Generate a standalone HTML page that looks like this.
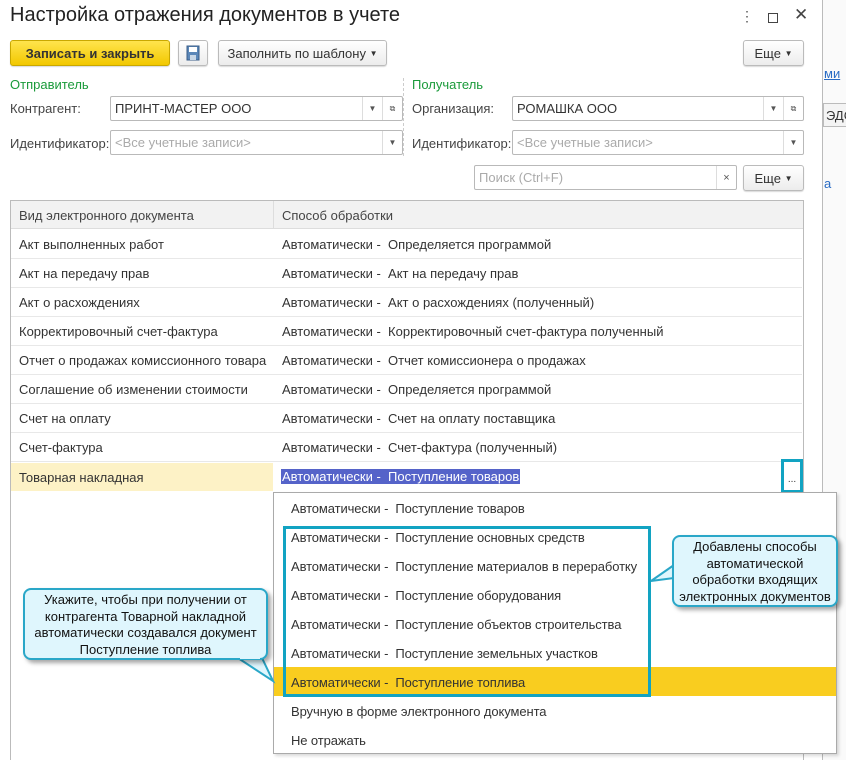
<!DOCTYPE html>
<html><head><meta charset="utf-8"><style>
*{box-sizing:border-box;margin:0;padding:0}
body{width:846px;height:760px;overflow:hidden;background:#fff;font-family:"Liberation Sans",sans-serif;font-size:13px;color:#333;position:relative}
.a{position:absolute}
.btn{position:absolute;border:1px solid #bbb;border-radius:3px;background:linear-gradient(#fff,#ececec);box-shadow:0 1px 1px rgba(0,0,0,.15);font-size:13px;color:#333;display:flex;align-items:center;justify-content:center}
.inp{position:absolute;border:1px solid #b9b9b9;border-radius:2px;background:#fff;height:24px;display:flex;align-items:center;padding-left:4px}
.dd{position:absolute;top:0;bottom:0;width:20px;border-left:1px solid #ddd;display:flex;align-items:center;justify-content:center;font-size:8px;color:#555}
.lbl{position:absolute;font-size:13px;color:#444}
.ph{color:#aaa}
.row{position:absolute;left:11px;width:791px;height:29px;border-bottom:1px solid #e8e8e8}
.row span{position:absolute;top:7px}
.c1{left:8px}.c2{left:271px}
.item{position:absolute;left:17px;font-size:13px;color:#333;letter-spacing:-0.1px}
.call{position:absolute;background:#dff6fd;border:2px solid #2aa7c8;border-radius:8px;text-align:center;font-size:13px;line-height:16.5px;color:#111;box-shadow:3px 3px 4px rgba(0,0,0,.35)}
</style></head><body>
<div class="a" style="left:822px;top:0;width:1px;height:760px;background:#bbb"></div>
<div class="a" style="left:823px;top:0;width:23px;height:760px;background:#fafafa"></div>
<div class="a" style="left:824px;top:66px;color:#2a6cc4;font-size:13px;text-decoration:underline">ми</div>
<div class="a" style="left:823px;top:103px;width:30px;height:24px;border:1px solid #bbb;background:#f4f4f4;font-size:13px;padding:4px 0 0 2px">ЭДС</div>
<div class="a" style="left:824px;top:176px;color:#2a6cc4">а</div>

<div class="a" style="left:10px;top:4px;font-size:20px;color:#222">Настройка отражения документов в учете</div>
<div class="a" style="left:740px;top:8px;font-size:14px;color:#555">⋮</div>
<div class="a" style="left:768px;top:13px;width:10px;height:10px;border:1.5px solid #444"></div>
<div class="a" style="left:794px;top:5px;font-size:17px;color:#444">✕</div>

<div class="btn" style="left:10px;top:40px;width:160px;height:26px;background:linear-gradient(#ffe44d,#f2c800);border-color:#c9a800;font-weight:bold;color:#333">Записать и закрыть</div>
<div class="btn" style="left:178px;top:40px;width:30px;height:26px"><svg width="14" height="16"><rect x="1" y="1" width="12" height="14" fill="#5b87b8" stroke="#3a5d88"/><rect x="3" y="2" width="8" height="5" fill="#fff"/><rect x="4" y="10" width="6" height="5" fill="#c9d7e6"/></svg></div>
<div class="btn" style="left:218px;top:40px;width:169px;height:26px">Заполнить по шаблону&nbsp;<span style="font-size:8px">▼</span></div>
<div class="btn" style="left:743px;top:40px;width:61px;height:26px">Еще&nbsp;<span style="font-size:8px">▼</span></div>

<div class="a" style="left:10px;top:77px;color:#1a9a3a">Отправитель</div>
<div class="a" style="left:412px;top:77px;color:#1a9a3a">Получатель</div>
<div class="a" style="left:403px;top:78px;height:78px;border-left:1px dashed #ccc"></div>
<div class="lbl" style="left:10px;top:101px">Контрагент:</div>
<div class="inp" style="left:110px;top:96px;width:293px;height:25px">ПРИНТ-МАСТЕР ООО<div class="dd" style="right:20px">▼</div><div class="dd" style="right:0">⧉</div></div>
<div class="lbl" style="left:10px;top:136px">Идентификатор:</div>
<div class="inp ph" style="left:110px;top:130px;width:293px;height:25px">&lt;Все учетные записи&gt;<div class="dd" style="right:0">▼</div></div>
<div class="lbl" style="left:412px;top:101px">Организация:</div>
<div class="inp" style="left:512px;top:96px;width:292px;height:25px">РОМАШКА ООО<div class="dd" style="right:20px">▼</div><div class="dd" style="right:0">⧉</div></div>
<div class="lbl" style="left:412px;top:136px">Идентификатор:</div>
<div class="inp ph" style="left:512px;top:130px;width:292px;height:25px">&lt;Все учетные записи&gt;<div class="dd" style="right:0">▼</div></div>
<div class="inp ph" style="left:474px;top:165px;width:263px;height:25px">Поиск (Ctrl+F)<div class="dd" style="right:0;font-size:11px">×</div></div>
<div class="btn" style="left:743px;top:165px;width:61px;height:26px">Еще&nbsp;<span style="font-size:8px">▼</span></div>

<div class="a" style="left:10px;top:200px;width:794px;height:560px;border:1px solid #bbb;border-bottom:none"></div>
<div class="a" style="left:11px;top:201px;width:792px;height:28px;background:#f2f2f2;border-bottom:1px solid #ddd"></div>
<div class="a" style="left:273px;top:201px;width:1px;height:28px;background:#ddd"></div>
<div class="a" style="left:19px;top:208px;color:#444">Вид электронного документа</div>
<div class="a" style="left:282px;top:208px;color:#444">Способ обработки</div>

<div class="row" style="top:230px"><span class="c1">Акт выполненных работ</span><span class="c2">Автоматически -&nbsp; Определяется программой</span></div>
<div class="row" style="top:259px"><span class="c1">Акт на передачу прав</span><span class="c2">Автоматически -&nbsp; Акт на передачу прав</span></div>
<div class="row" style="top:288px"><span class="c1">Акт о расхождениях</span><span class="c2">Автоматически -&nbsp; Акт о расхождениях (полученный)</span></div>
<div class="row" style="top:317px"><span class="c1">Корректировочный счет-фактура</span><span class="c2">Автоматически -&nbsp; Корректировочный счет-фактура полученный</span></div>
<div class="row" style="top:346px"><span class="c1">Отчет о продажах комиссионного товара</span><span class="c2">Автоматически -&nbsp; Отчет комиссионера о продажах</span></div>
<div class="row" style="top:375px"><span class="c1">Соглашение об изменении стоимости</span><span class="c2">Автоматически -&nbsp; Определяется программой</span></div>
<div class="row" style="top:404px"><span class="c1">Счет на оплату</span><span class="c2">Автоматически -&nbsp; Счет на оплату поставщика</span></div>
<div class="row" style="top:433px"><span class="c1">Счет-фактура</span><span class="c2">Автоматически -&nbsp; Счет-фактура (полученный)</span></div>
<div class="a" style="left:11px;top:463px;width:262px;height:28px;background:#fdf2c6"></div>
<div class="a" style="left:19px;top:470px">Товарная накладная</div>
<div class="a" style="left:281px;top:469px;background:#5563c9;color:#fff;padding:0 1px">Автоматически -&nbsp; Поступление товаров</div>
<div class="a" style="left:781px;top:459px;width:22px;height:34px;border:3px solid #12a3c2;font-size:10px;text-align:center;padding-top:12px">...</div>

<div class="a" style="left:273px;top:492px;width:564px;height:262px;border:1px solid #aaa;background:#fff;box-shadow:2px 2px 3px rgba(0,0,0,.15)">
<div class="a" style="left:0;top:174px;width:562px;height:29px;background:#f9cd1f"></div>
<div class="item" style="top:8px">Автоматически -&nbsp; Поступление товаров</div>
<div class="item" style="top:37px">Автоматически -&nbsp; Поступление основных средств</div>
<div class="item" style="top:66px">Автоматически -&nbsp; Поступление материалов в переработку</div>
<div class="item" style="top:95px">Автоматически -&nbsp; Поступление оборудования</div>
<div class="item" style="top:124px">Автоматически -&nbsp; Поступление объектов строительства</div>
<div class="item" style="top:153px">Автоматически -&nbsp; Поступление земельных участков</div>
<div class="item" style="top:182px">Автоматически -&nbsp; Поступление топлива</div>
<div class="item" style="top:211px">Вручную в форме электронного документа</div>
<div class="item" style="top:240px">Не отражать</div>
</div>
<div class="a" style="left:283px;top:526px;width:368px;height:171px;border:3px solid #12a3c2"></div>

<svg class="a" style="left:0;top:0" width="846" height="760">
<polygon points="674,565 651,581 674,578" fill="#dff6fd" stroke="#2aa7c8" stroke-width="2"/>
<polygon points="238,658 273,681 262,658" fill="#dff6fd" stroke="#2aa7c8" stroke-width="2"/>
</svg>
<div class="call" style="left:672px;top:535px;width:166px;height:72px;padding-top:2px">Добавлены способы<br>автоматической<br>обработки входящих<br>электронных документов</div>
<div class="call" style="left:23px;top:588px;width:245px;height:72px;padding-top:2px">Укажите, чтобы при получении от<br>контрагента Товарной накладной<br>автоматически создавался документ<br>Поступление топлива</div>
<div class="a" style="left:240px;top:655px;width:20px;height:4px;background:#dff6fd"></div>
</body></html>
